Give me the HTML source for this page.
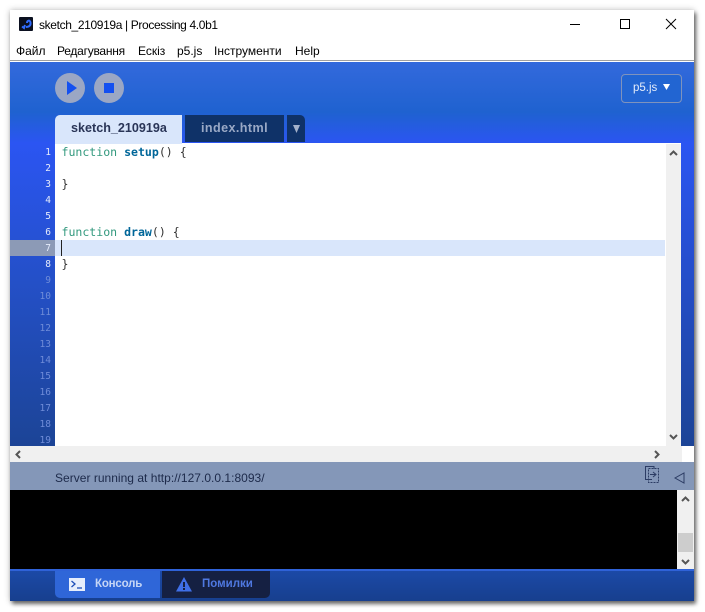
<!DOCTYPE html>
<html><head><meta charset="utf-8">
<style>
html,body{margin:0;padding:0;width:705px;height:612px;overflow:hidden;background:#fff}
div,span,svg{position:absolute;white-space:pre}
body{font-family:"Liberation Sans",sans-serif}
.m{font-size:12px;color:#000;top:44px;line-height:14px}
.code{font-family:"DejaVu Sans Mono",monospace;font-size:11.55px;line-height:16px;left:61.5px;color:#333}
.code b{color:#006699}
.code i{font-style:normal;color:#33997e}
.n{font-family:"DejaVu Sans Mono",monospace;font-size:9.5px;line-height:16px;width:41px;text-align:right;left:10px;margin-top:1px}
.t{font-size:12.6px;font-weight:bold;line-height:15px;top:121px}
.b{font-size:11.5px;font-weight:bold;line-height:15px;top:577px}
</style></head><body>
<div style="left:10px;top:10px;width:684px;height:591px;background:#fff;box-shadow:0 0 6px rgba(0,0,0,.25),2px 3px 4px rgba(0,0,0,.55)"></div>

<svg style="left:19px;top:17px" width="14" height="14" viewBox="0 0 14 14"><rect width="14" height="14" rx="1" fill="#0b1020"/><path d="M3 9.5l2 1.5 1-3M7 10c3 0 5-1.500 4.500-4.500S8 3.500 8 6" fill="none" stroke="#2f6bff" stroke-width="2"/></svg>
<div style="left:39px;top:18px;font-size:12px;line-height:14px;color:#000;letter-spacing:-.36px">sketch_210919a | Processing 4.0b1</div>
<svg style="left:570px;top:16px" width="110" height="16" viewBox="0 0 110 16"><path d="M0 8.500H10" stroke="#000" fill="none"/><rect x="50.500" y="3.500" width="9" height="9" fill="none" stroke="#000"/><path d="M96 3l10 10M106 3L96 13" stroke="#000" fill="none"/></svg>

<div class="m" style="left:16px">Файл</div>
<div class="m" style="left:57px;letter-spacing:-.25px">Редагування</div>
<div class="m" style="left:138px">Ескіз</div>
<div class="m" style="left:177px">p5.js</div>
<div class="m" style="left:214px">Інструменти</div>
<div class="m" style="left:295px">Help</div>
<div style="left:10px;top:60px;width:684px;height:1px;background:#a0a0a0"></div>

<div style="left:10px;top:62px;width:684px;height:81px;background:linear-gradient(#3369dc 0%,#1f62d0 62%,#2b55f2 100%)"></div>
<div style="left:55px;top:73px;width:30px;height:30px;border-radius:50%;background:#9ba7c4"></div>
<svg style="left:66px;top:81px" width="12" height="14" viewBox="0 0 12 14"><path d="M1 0L11 7L1 14Z" fill="#1450f0"/></svg>
<div style="left:94px;top:73px;width:30px;height:30px;border-radius:50%;background:#9ba7c4"></div>
<div style="left:104px;top:83px;width:10px;height:10px;background:#1450f0"></div>

<div style="left:621px;top:74px;width:59px;height:27px;border:1px solid #7f93bd;border-radius:4px;background:#2265d2"></div>
<div style="left:633px;top:81px;font-size:11.5px;line-height:14px;color:#e4ecfa">p5.js</div>
<svg style="left:663px;top:84px" width="7" height="6"><path d="M0 0H7L3.500 6Z" fill="#fff"/></svg>

<div style="left:55px;top:115px;width:127px;height:29px;background:#d9e6fb;border-radius:5px 0 0 0"></div>
<div class="t" style="left:71px;color:#2a3557">sketch_210919a</div>
<div style="left:185px;top:115px;width:99px;height:27px;background:#0f3268"></div>
<div class="t" style="left:201px;color:#9aa9c6;letter-spacing:.4px">index.html</div>
<div style="left:287px;top:115px;width:18px;height:27px;background:#0f3268;border-radius:0 5px 0 0"></div>
<svg style="left:293px;top:125px" width="7" height="8"><path d="M0 0H7L3.500 8Z" fill="#a3b1cb"/></svg>

<div style="left:10px;top:143px;width:45px;height:303px;background:linear-gradient(#2b55f2 0%,#2450c8 45%,#1c4496 100%)"></div>
<div style="left:681px;top:143px;width:13px;height:303px;background:linear-gradient(#2b55f2,#1c4496)"></div>
<div style="left:55px;top:144px;width:611px;height:302px;background:#fff"></div>
<div style="left:55px;top:240px;width:610px;height:16px;background:#d9e6fb"></div>
<div style="left:10px;top:240px;width:45px;height:16px;background:#8c9ab6"></div>
<div style="left:61px;top:240px;width:1px;height:16px;background:#222"></div>

<div class="n" style="top:144px;color:#e6ecfb">1</div>
<div class="n" style="top:160px;color:#e6ecfb">2</div>
<div class="n" style="top:176px;color:#e6ecfb">3</div>
<div class="n" style="top:192px;color:#e6ecfb">4</div>
<div class="n" style="top:208px;color:#e6ecfb">5</div>
<div class="n" style="top:224px;color:#e6ecfb">6</div>
<div class="n" style="top:240px;color:#e6ecfb">7</div>
<div class="n" style="top:256px;color:#e6ecfb">8</div>
<div class="n" style="top:272px;color:#6f8cd8">9</div>
<div class="n" style="top:288px;color:#6f8cd8">10</div>
<div class="n" style="top:304px;color:#6f8cd8">11</div>
<div class="n" style="top:320px;color:#6f8cd8">12</div>
<div class="n" style="top:336px;color:#6f8cd8">13</div>
<div class="n" style="top:352px;color:#6f8cd8">14</div>
<div class="n" style="top:368px;color:#6f8cd8">15</div>
<div class="n" style="top:384px;color:#6f8cd8">16</div>
<div class="n" style="top:400px;color:#6f8cd8">17</div>
<div class="n" style="top:416px;color:#6f8cd8">18</div>
<div style="left:10px;top:432px;width:41px;height:14px;overflow:hidden"><div class="n" style="left:0;top:0;color:#6f8cd8">19</div></div>

<div class="code" style="top:144px"><i>function</i> <b>setup</b>() {</div>
<div class="code" style="top:176px">}</div>
<div class="code" style="top:224px"><i>function</i> <b>draw</b>() {</div>
<div class="code" style="top:256px">}</div>

<div style="left:666px;top:144px;width:15px;height:302px;background:#f0f0f0"></div>
<div style="left:10px;top:446px;width:672px;height:16px;background:#f0f0f0"></div>
<svg style="left:669px;top:150px" width="9" height="6"><path d="M1 5L4.500 1.500L8 5" fill="none" stroke="#555" stroke-width="2"/></svg>
<svg style="left:669px;top:434px" width="9" height="6"><path d="M1 1L4.500 4.500L8 1" fill="none" stroke="#555" stroke-width="2"/></svg>
<svg style="left:15px;top:450px" width="6" height="9"><path d="M5 1L1.500 4.500L5 8" fill="none" stroke="#555" stroke-width="2"/></svg>
<svg style="left:654px;top:450px" width="6" height="9"><path d="M1 1L4.500 4.500L1 8" fill="none" stroke="#555" stroke-width="2"/></svg>

<div style="left:10px;top:462px;width:684px;height:28px;background:#8497b8"></div>
<div style="left:55px;top:471px;font-size:12px;line-height:15px;color:#1d2a4a;letter-spacing:.02px">Server running at http://127.0.0.1:8093/</div>
<svg style="left:644px;top:465px" width="16" height="18" viewBox="0 0 16 18" fill="none" stroke="#2c3c64"><path d="M8 14.500H1.500V1.500H10V3.500"/><path d="M4.500 3.500H14.500V17.500H4.500Z" stroke-dasharray="2 1"/><path d="M6 9.500H12M9 7l3 2.500L9 12"/></svg>
<svg style="left:674px;top:472px" width="11" height="12" viewBox="0 0 11 12" fill="none" stroke="#2c3c64"><path d="M10 1V11L1 6Z"/></svg>

<div style="left:10px;top:490px;width:667px;height:79px;background:#000"></div>
<div style="left:677px;top:490px;width:17px;height:79px;background:#f0f0f0"></div>
<div style="left:678px;top:533px;width:15px;height:19px;background:#cdcdcd"></div>
<svg style="left:681px;top:496px" width="9" height="6"><path d="M1 5L4.500 1.500L8 5" fill="none" stroke="#555" stroke-width="2"/></svg>
<svg style="left:681px;top:559px" width="9" height="6"><path d="M1 1L4.500 4.500L8 1" fill="none" stroke="#555" stroke-width="2"/></svg>

<div style="left:10px;top:569px;width:684px;height:32px;background:linear-gradient(#1c4aa8,#173f8e)"></div>
<div style="left:10px;top:569px;width:684px;height:2px;background:#2f62d8"></div>
<div style="left:55px;top:571px;width:105px;height:27px;background:#2f66d8;border-radius:0 0 0 5px"></div>
<div style="left:69px;top:578px;width:16px;height:13px;background:#e6eefc"></div>
<svg style="left:69px;top:578px" width="16" height="13"><path d="M2.500 3L6 6L2.500 9" fill="none" stroke="#1d4fb8" stroke-width="1.300"/><path d="M8 10H13" stroke="#1d4fb8" stroke-width="1.300"/></svg>
<div class="b" style="left:95px;color:#c6d6f6;letter-spacing:-.2px">Консоль</div>
<div style="left:162px;top:571px;width:108px;height:27px;background:#152042;border-radius:0 0 5px 0"></div>
<svg style="left:176px;top:577px" width="16" height="15" viewBox="0 0 16 15"><path d="M8 0L16 14.500H0Z" fill="#3f6fe8"/><rect x="7" y="5" width="2" height="5" fill="#152042"/><rect x="7" y="11" width="2" height="2" fill="#152042"/></svg>
<div class="b" style="left:202px;color:#4f78e0">Помилки</div>
</body></html>
